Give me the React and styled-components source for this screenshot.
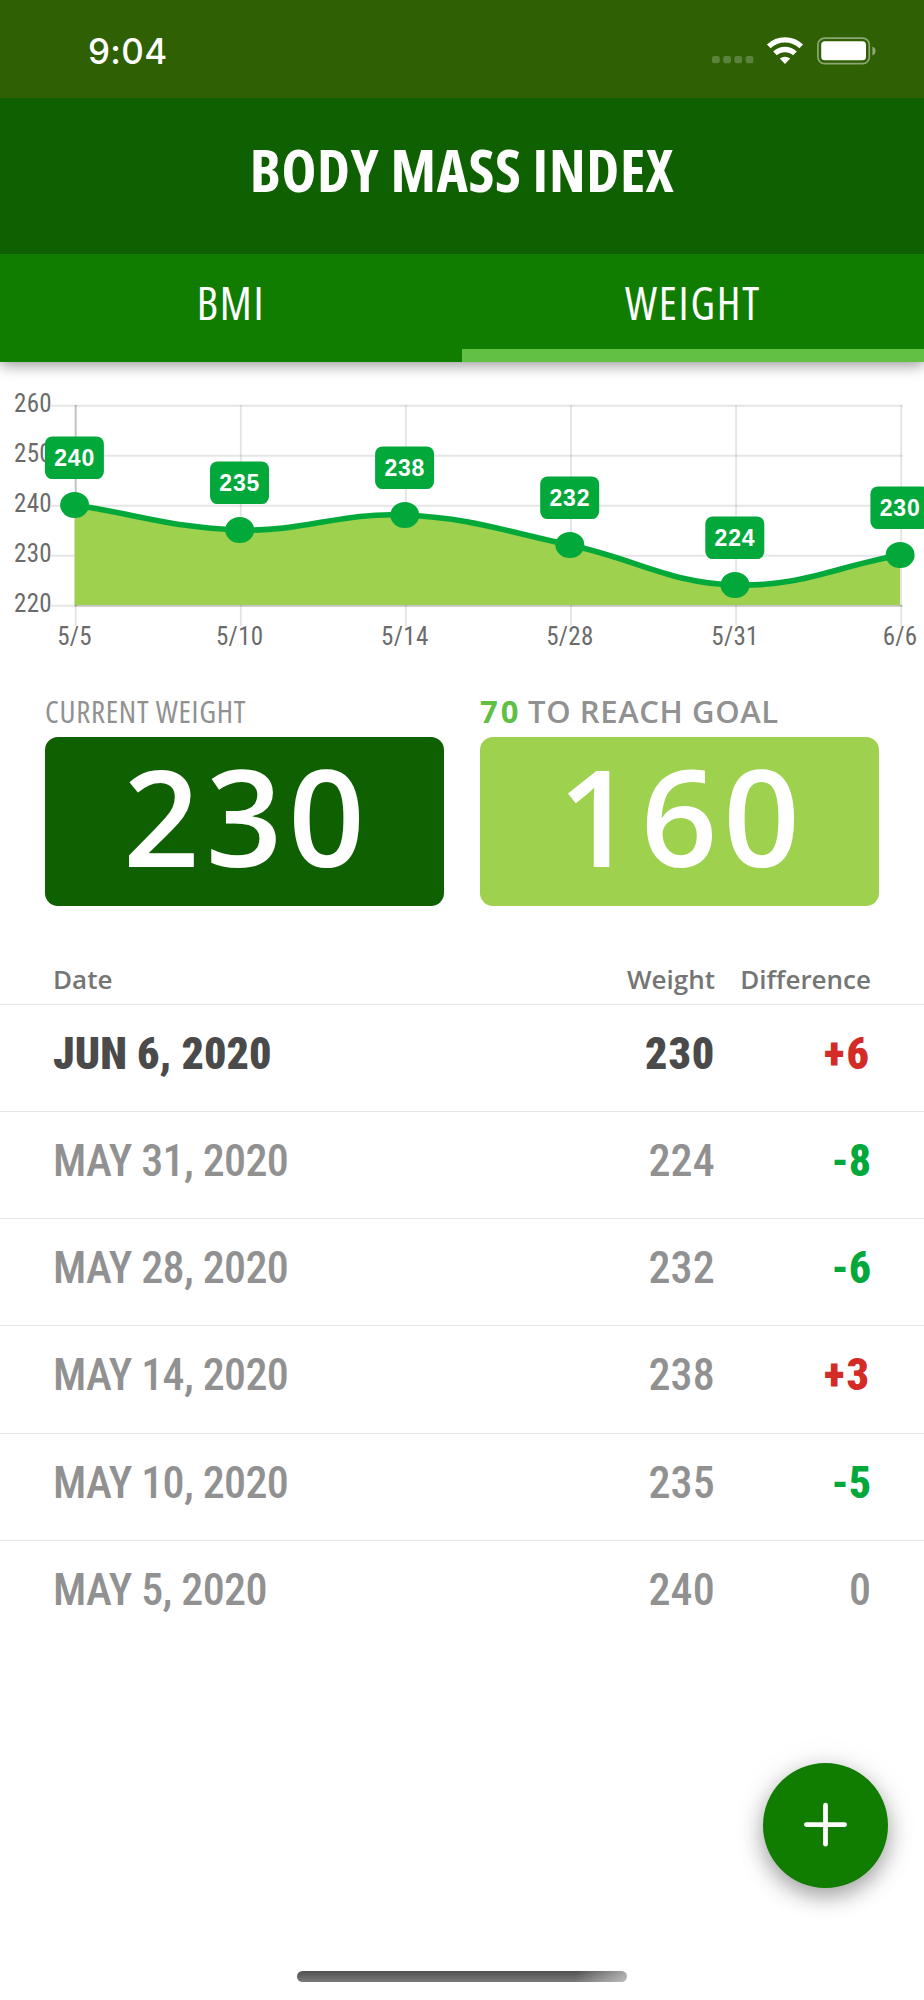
import styled, { createGlobalStyle } from "styled-components";

const GlobalStyle = createGlobalStyle`
    * {
        box-sizing: border-box;
    }
    body {
        margin: 0;
        background: #fff;
        font-family: "Open Sans", sans-serif;
    }
`

const Screen = styled.div`
    width: 924px;
    height: 2000px;
    display: flex;
    flex-direction: column;
    position: relative;
    overflow: hidden;
    background: #fff;
`

const StatusBar = styled.div`
    height: 98px;
    flex: none;
    display: flex;
    justify-content: space-between;
    align-items: center;
    padding: 3px 48px 0 88px;
    background: #2f6004;
    color: #fff;
`

const Time = styled.span`
    font-family: Inter, sans-serif;
    font-size: 35px;
    font-weight: 500;
    letter-spacing: 0.3px;
    line-height: 42px;
`

const Header = styled.header`
    height: 156px;
    flex: none;
    position: relative;
    z-index: 1;
    display: flex;
    justify-content: center;
    align-items: center;
    padding-bottom: 15px;
    background: #0f6000;
`

const Title = styled.h1`
    margin: 0;
    color: #fff;
    font-size: 59px;
    font-weight: 700;
    font-stretch: 75%;
    letter-spacing: 0.65px;
    line-height: 80px;
`

const Tabs = styled.nav`
    height: 107.5px;
    flex: none;
    display: flex;
    background: #107c00;
    box-shadow: 0 3px 14px rgba(0, 0, 0, 0.42);
`

const Tab = styled.a`
    flex: 1;
    display: flex;
    justify-content: center;
    color: #fff;
    font-size: 45px;
    font-stretch: 75%;
    letter-spacing: 1.8px;
    line-height: 98px;
    border-bottom: 13px solid ${props => props.$active ? "#62c144" : "transparent"};
`

const ChartSvg = styled.svg`
    display: block;
    flex: none;
    margin-top: -0.5px;
`

const AxisText = styled.text`
    fill: #6b6b6b;
    font-family: Roboto, sans-serif;
    font-size: 25px;
    font-stretch: 75%;
    letter-spacing: 0.3px;
`

const PointText = styled.text`
    fill: #fff;
    font-family: "Liberation Sans", sans-serif;
    font-size: 23px;
    font-weight: 700;
    letter-spacing: 0.8px;
`

const Stats = styled.section`
    display: flex;
    gap: 36px;
    padding: 0 45px;
`

const Stat = styled.div`
    flex: 1;
`

const StatLabel = styled.div`
    height: 40px;
    margin-bottom: 6px;
    color: #919191;
    font-size: 31px;
    font-weight: ${props => props.$strong ? 600 : 400};
    font-stretch: ${props => props.$strong ? "100%" : "75%"};
    letter-spacing: ${props => props.$strong ? "0.6px" : "0.7px"};
    line-height: 40px;
    white-space: nowrap;
`

const Remaining = styled.span`
    color: #5fc043;
    font-weight: 700;
    letter-spacing: 3px;
    margin-right: -2px;
`

const StatBox = styled.div`
    height: 169px;
    padding-left: 5px;
    border-radius: 13px;
    background: ${props => props.$color};
    color: #fff;
    font-size: 134px;
    font-weight: 600;
    letter-spacing: 6px;
    line-height: 156px;
    text-align: center;
`

const Row = styled.div`
    height: 107.15px;
    display: grid;
    grid-template-columns: 1fr 200px 156px;
    padding: 0 53px;
    border-top: ${props => props.$line ? "1px solid #e6e6e6" : "none"};
    font-family: Roboto, sans-serif;
    font-size: 44px;
    font-stretch: 75%;
    font-weight: 500;
    line-height: 98px;
    color: #919191;
`

const HeadRow = styled(Row)`
    height: 98px;
    padding-top: 46px;
    font-family: "Open Sans", sans-serif;
    font-size: 26px;
    font-stretch: 100%;
    font-weight: 600;
    line-height: 54px;
    color: #757575;
`

const Cell = styled.span`
    text-align: ${props => props.$right ? "right" : "left"};
    white-space: nowrap;
`

const DateCell = styled(Cell)`
    font-weight: ${props => props.$latest ? 900 : 500};
    letter-spacing: ${props => props.$latest ? 0 : "-0.6px"};
    color: ${props => props.$latest ? "#4a4a4a" : "#919191"};
`

const WeightCell = styled(DateCell)`
    letter-spacing: ${props => props.$latest ? "0.8px" : "0.2px"};
`

const DiffCell = styled(Cell)`
    font-weight: ${props => props.$diff > 0 ? 900 : props.$diff ? 800 : 500};
    letter-spacing: ${props => props.$diff > 0 ? "2px" : 0};
    color: ${props => props.$diff > 0 ? "#d32b26" : props.$diff < 0 ? "#03a83b" : "#919191"};
`

const AddButton = styled.button`
    position: absolute;
    right: 36px;
    bottom: 112px;
    width: 125px;
    height: 125px;
    padding: 0;
    border: 0;
    border-radius: 50%;
    background: #107c00;
    box-shadow: 0 8px 22px rgba(0, 0, 0, 0.36), 0 2px 40px rgba(0, 0, 0, 0.06);
`

const HomeIndicator = styled.div`
    position: absolute;
    left: 297px;
    bottom: 18px;
    width: 330px;
    height: 11px;
    border-radius: 6px;
    background: linear-gradient(100deg, transparent 84%, rgba(255, 255, 255, 0.5) 100%), linear-gradient(#505050, #7a7a7a);
`

const entries = [
    { date: "JUN 6, 2020", short: "6/6", weight: 230, diff: 6 },
    { date: "MAY 31, 2020", short: "5/31", weight: 224, diff: -8 },
    { date: "MAY 28, 2020", short: "5/28", weight: 232, diff: -6 },
    { date: "MAY 14, 2020", short: "5/14", weight: 238, diff: 3 },
    { date: "MAY 10, 2020", short: "5/10", weight: 235, diff: -5 },
    { date: "MAY 5, 2020", short: "5/5", weight: 240, diff: 0 },
]

const points = [...entries].reverse().map((e, i) => ({
    ...e,
    x: 74.6 + i * 165.1,
    y: 244 - (e.weight - 220) * 5,
}))

// same control points as a chart.js line with tension 0.4
const control = i => {
    const prev = points[i - 1] || points[i]
    const cur = points[i]
    const next = points[i + 1] || cur
    const a = Math.hypot(cur.x - prev.x, cur.y - prev.y)
    const b = Math.hypot(next.x - cur.x, next.y - cur.y)
    const fa = 0.4 * a / (a + b)
    const fb = 0.4 * b / (a + b)
    return [
        cur.x - fa * (next.x - prev.x), cur.y - fa * (next.y - prev.y),
        cur.x + fb * (next.x - prev.x), cur.y + fb * (next.y - prev.y),
    ]
}

const curve = points.slice(1).reduce((d, p, i) => {
    const c1 = control(i)
    const c2 = control(i + 1)
    return `${d} C${c1[2]} ${c1[3]} ${c2[0]} ${c2[1]} ${p.x} ${p.y}`
}, `M${points[0].x} ${points[0].y}`)

function Chart() {
    return <ChartSvg width="924" height="330" viewBox="0 0 924 330">
        {[260, 250, 240, 230, 220].map(v => {
            const y = 244.7 - (v - 220) * 5
            return <g key={v}>
                <line x1="51" x2="902.5" y1={y} y2={y} stroke="rgba(0,0,0,.1)" strokeWidth="1.9" />
                <AxisText x="52" y={y + 5.8} textAnchor="end">{v}</AxisText>
            </g>
        })}
        {points.map((p, i) => <g key={p.short}>
            <line x1={p.x + 1.1} x2={p.x + 1.1} y1="44" y2="245" stroke={i === 0 ? "rgba(0,0,0,.25)" : "rgba(0,0,0,.1)"} strokeWidth="1.9" />
            <line x1={p.x + 1.1} x2={p.x + 1.1} y1="245" y2="265" stroke="rgba(0,0,0,.1)" strokeWidth="1.9" />
            <AxisText x={p.x} y="284" textAnchor="middle">{p.short}</AxisText>
        </g>)}
        <line x1={points[0].x} x2="902.5" y1="244.7" y2="244.7" stroke="rgba(0,0,0,.15)" strokeWidth="1.9" />
        <path d={`${curve} V244 H${points[0].x} Z`} fill="#9dd14e" />
        <path d={curve} fill="none" stroke="#03a83b" strokeWidth="5.6" />
        {points.map(p => <g key={p.short}>
            <ellipse cx={p.x} cy={p.y} rx="14.5" ry="13.1" fill="#03a83b" />
            <rect x={p.x - 29.7} y={p.y - 68.6} width="59" height="42.7" rx="7.5" fill="#03a83b" />
            <PointText x={p.x} y={p.y - 39.3} textAnchor="middle">{p.weight}</PointText>
        </g>)}
    </ChartSvg>
}

function StatusIcons() {
    return <svg width="164" height="30" viewBox="0 0 164 30">
        {[0, 11.2, 22.4, 33.6].map(x => <rect key={x} x={x} y="20" width="7.8" height="7.2" rx="2.2" fill="#fff" opacity=".22" />)}
        <g fill="none" stroke="#fff" strokeWidth="5.4">
            <path d="M56.8 10.4 A23.5 23.5 0 0 1 89.2 10.4" />
            <path d="M63 17.4 A14.6 14.6 0 0 1 83 17.4" />
        </g>
        <path d="M73 28 L67.8 22.6 A8 8 0 0 1 78.2 22.6 Z" fill="#fff" />
        <rect x="105.9" y="2.1" width="51.4" height="25.6" rx="6.6" fill="none" stroke="#fff" strokeWidth="1.7" opacity=".45" />
        <rect x="109.2" y="5.3" width="44.8" height="19" rx="3.6" fill="#fff" />
        <path d="M160.4 10.4 Q163.6 11.8 163.6 15 Q163.6 18.2 160.4 19.4 Z" fill="#fff" opacity=".45" />
    </svg>
}

export default function App() {
    return <Screen>
        <GlobalStyle />
        <StatusBar>
            <Time>9:04</Time>
            <StatusIcons />
        </StatusBar>
        <Header>
            <Title>BODY MASS INDEX</Title>
        </Header>
        <Tabs>
            <Tab>BMI</Tab>
            <Tab $active>WEIGHT</Tab>
        </Tabs>
        <Chart />
        <Stats>
            <Stat>
                <StatLabel>CURRENT WEIGHT</StatLabel>
                <StatBox $color="#0f6000">230</StatBox>
            </Stat>
            <Stat>
                <StatLabel $strong><Remaining>70</Remaining> TO REACH GOAL</StatLabel>
                <StatBox $color="#9dd14e">160</StatBox>
            </Stat>
        </Stats>
        <HeadRow>
            <Cell>Date</Cell>
            <Cell $right>Weight</Cell>
            <Cell $right>Difference</Cell>
        </HeadRow>
        {entries.map((e, i) => <Row key={e.date} $line>
            <DateCell $latest={i === 0}>{e.date}</DateCell>
            <WeightCell $right $latest={i === 0}>{e.weight}</WeightCell>
            <DiffCell $right $diff={e.diff}>{e.diff > 0 ? `+${e.diff}` : e.diff}</DiffCell>
        </Row>)}
        <AddButton>
            <svg width="125" height="125" viewBox="0 0 125 125">
                <path d="M43.4 61.6 H81.6 M62.5 42.2 V81.2" stroke="#fff" strokeWidth="4.8" strokeLinecap="round" />
            </svg>
        </AddButton>
        <HomeIndicator />
    </Screen>
}
